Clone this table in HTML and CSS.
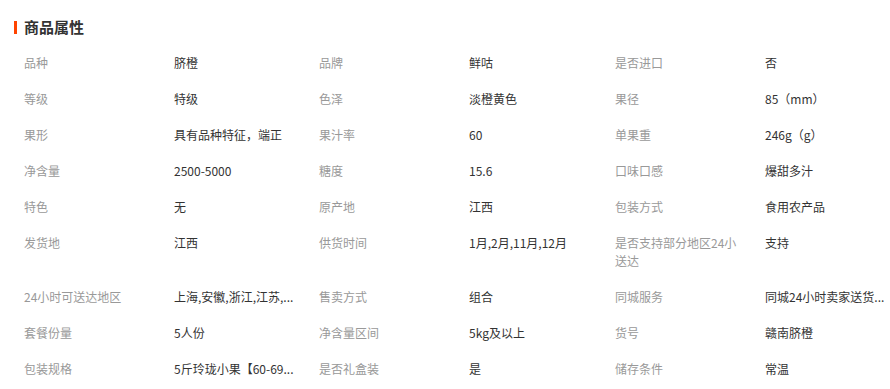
FILE: index.html
```html
<!DOCTYPE html>
<html lang="zh-CN">
<head>
<meta charset="utf-8">
<title>商品属性</title>
<link rel="stylesheet" href="styles.css">
</head>
<body>
<section class="attrs">
  <h2 class="attrs-title">商品属性</h2>
  <div class="attrs-grid">
    <div class="k">品种</div><div class="v">脐橙</div>
    <div class="k">品牌</div><div class="v">鲜咕</div>
    <div class="k">是否进口</div><div class="v">否</div>

    <div class="k">等级</div><div class="v">特级</div>
    <div class="k">色泽</div><div class="v">淡橙黄色</div>
    <div class="k">果径</div><div class="v">85（mm）</div>

    <div class="k">果形</div><div class="v">具有品种特征，端正</div>
    <div class="k">果汁率</div><div class="v">60</div>
    <div class="k">单果重</div><div class="v">246g（g）</div>

    <div class="k">净含量</div><div class="v">2500-5000</div>
    <div class="k">糖度</div><div class="v">15.6</div>
    <div class="k">口味口感</div><div class="v">爆甜多汁</div>

    <div class="k">特色</div><div class="v">无</div>
    <div class="k">原产地</div><div class="v">江西</div>
    <div class="k">包装方式</div><div class="v">食用农产品</div>

    <div class="k">发货地</div><div class="v">江西</div>
    <div class="k">供货时间</div><div class="v">1月,2月,11月,12月</div>
    <div class="k">是否支持部分地区24小送达</div><div class="v">支持</div>

    <div class="k">24小时可送达地区</div><div class="v">上海,安徽,浙江,江苏,...</div>
    <div class="k">售卖方式</div><div class="v">组合</div>
    <div class="k">同城服务</div><div class="v">同城24小时卖家送货...</div>

    <div class="k">套餐份量</div><div class="v">5人份</div>
    <div class="k">净含量区间</div><div class="v">5kg及以上</div>
    <div class="k">货号</div><div class="v">赣南脐橙</div>

    <div class="k">包装规格</div><div class="v">5斤玲珑小果【60-69...</div>
    <div class="k">是否礼盒装</div><div class="v">是</div>
    <div class="k">储存条件</div><div class="v">常温</div>
  </div>
</section>
</body>
</html>
```
FILE: styles.css
```css
html, body {
  margin: 0;
  padding: 0;
  background: #fff;
}
body {
  font-family: "Noto Sans CJK SC", "Noto Sans", sans-serif;
  font-size: 12px;
  color: #333;
}
.attrs {
  padding: 0 0 0 14px;
}
.attrs-title {
  display: flex;
  align-items: center;
  gap: 7px;
  margin: 20px 0 0;
  height: 14px;
  font-size: 15px;
  font-weight: bold;
  color: #333;
  line-height: 14px;
}
.attrs-title::before {
  content: "";
  display: block;
  width: 3px;
  height: 13px;
  background: #ff4400;
}
.attrs-grid {
  margin-top: 11px;
  display: grid;
  grid-template-columns: 160px 135px 160px 136px 160px 1fr;
  line-height: 18px;
}
.k, .v {
  padding: 9px 0;
  min-width: 0;
}
.k {
  padding-left: 10px;
  padding-right: 24px;
  color: #999;
}
.v {
  padding-right: 10px;
  color: #333;
  white-space: nowrap;
}
.v:nth-child(6n) {
  padding-right: 0;
}
```
